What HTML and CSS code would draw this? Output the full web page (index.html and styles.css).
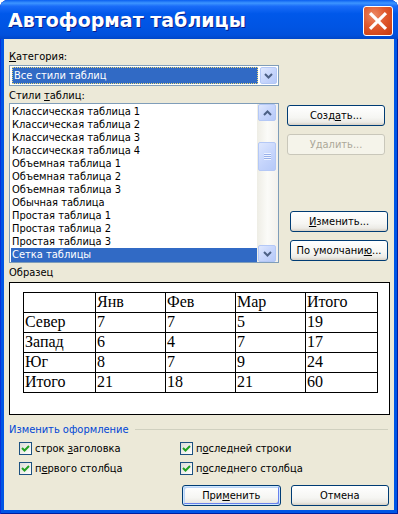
FILE: index.html
```html
<!DOCTYPE html>
<html lang="ru">
<head>
  <meta charset="UTF-8" />
  <title>Автоформат таблицы</title>
  <link rel="stylesheet" href="styles.css">
</head>
<body>
  <div class="window">
    <div class="titlebar">
      <span class="title">Автоформат таблицы</span>
      <div class="close">
        <svg width="19" height="19" viewBox="0 0 19 19"><path d="M3 3 L16 16 M16 3 L3 16" stroke="#fff" stroke-width="3" stroke-linecap="square"/></svg>
      </div>
    </div>

    <div class="client">
      <div class="lbl lbl-cat"><u>К</u>атегория:</div>
      <div class="combo">
        <div class="combo-value"><span>Все стили таблиц</span></div>
        <div class="sbtn combo-btn">
          <svg width="9" height="6" viewBox="0 0 9 6"><path d="M1 1 L4.5 4.5 L8 1" fill="none" stroke="#4d6185" stroke-width="2"/></svg>
        </div>
      </div>

      <div class="lbl lbl-styles">Стили <u>т</u>аблиц:</div>
      <div class="styles-row">
        <div class="listbox">
          <ul class="items">
            <li>Классическая таблица 1</li>
            <li>Классическая таблица 2</li>
            <li>Классическая таблица 3</li>
            <li>Классическая таблица 4</li>
            <li>Объемная таблица 1</li>
            <li>Объемная таблица 2</li>
            <li>Объемная таблица 3</li>
            <li>Обычная таблица</li>
            <li>Простая таблица 1</li>
            <li>Простая таблица 2</li>
            <li>Простая таблица 3</li>
            <li class="selected">Сетка таблицы</li>
          </ul>
          <div class="scrollbar">
            <div class="sbtn">
              <svg width="9" height="6" viewBox="0 0 9 6"><path d="M1 5 L4.5 1.5 L8 5" fill="none" stroke="#4d6185" stroke-width="2"/></svg>
            </div>
            <div class="track">
              <div class="sbtn thumb">
                <svg width="7" height="7" viewBox="0 0 7 7"><path d="M0 0.5 H7 M0 2.5 H7 M0 4.5 H7 M0 6.5 H7" stroke="#eef3ff" stroke-width="1"/><path d="M0 1.5 H7 M0 3.5 H7 M0 5.5 H7" stroke="#8ca7e6" stroke-width="1" opacity="0.8"/></svg>
              </div>
            </div>
            <div class="sbtn">
              <svg width="9" height="6" viewBox="0 0 9 6"><path d="M1 1 L4.5 4.5 L8 1" fill="none" stroke="#4d6185" stroke-width="2"/></svg>
            </div>
          </div>
        </div>
        <div class="side-buttons">
          <div class="btn">Созд<u>а</u>ть...</div>
          <div class="btn disabled">Удалить...</div>
          <div class="btn shifted btn-edit"><u>И</u>зменить...</div>
          <div class="btn shifted">По умолчани<u>ю</u>...</div>
        </div>
      </div>

      <div class="lbl lbl-sample">Образец</div>
      <div class="preview">
        <table class="sample">
          <colgroup><col class="c-first"><col class="c-mid"><col class="c-mid"><col class="c-mid"><col class="c-last"></colgroup>
          <tr><td></td><td>Янв</td><td>Фев</td><td>Мар</td><td>Итого</td></tr>
          <tr><td>Север</td><td>7</td><td>7</td><td>5</td><td>19</td></tr>
          <tr><td>Запад</td><td>6</td><td>4</td><td>7</td><td>17</td></tr>
          <tr><td>Юг</td><td>8</td><td>7</td><td>9</td><td>24</td></tr>
          <tr><td>Итого</td><td>21</td><td>18</td><td>21</td><td>60</td></tr>
        </table>
      </div>

      <div class="group-head"><span>Изменить оформление</span><div class="rule"></div></div>
      <div class="checks">
        <label class="check"><span class="box"><svg width="11" height="11" viewBox="0 0 11 11"><path d="M2 5 L4.5 7.5 L9 3" fill="none" stroke="#21a121" stroke-width="2"/></svg></span><span>строк <u>з</u>аголовка</span></label>
        <label class="check"><span class="box"><svg width="11" height="11" viewBox="0 0 11 11"><path d="M2 5 L4.5 7.5 L9 3" fill="none" stroke="#21a121" stroke-width="2"/></svg></span><span>п<u>о</u>следней строки</span></label>
        <label class="check"><span class="box"><svg width="11" height="11" viewBox="0 0 11 11"><path d="M2 5 L4.5 7.5 L9 3" fill="none" stroke="#21a121" stroke-width="2"/></svg></span><span>п<u>е</u>рвого столбца</span></label>
        <label class="check"><span class="box"><svg width="11" height="11" viewBox="0 0 11 11"><path d="M2 5 L4.5 7.5 L9 3" fill="none" stroke="#21a121" stroke-width="2"/></svg></span><span>п<u>о</u>следнего столбца</span></label>
      </div>

      <div class="actions">
        <div class="btn default">При<u>м</u>енить</div>
        <div class="btn">Отмена</div>
      </div>
    </div>
  </div>
</body>
</html>
```

FILE: styles.css
```css
body {
  margin: 0;
  background: #fff;
  font-family: 'DejaVu Sans Condensed', 'DejaVu Sans', sans-serif;
  font-size: 11px;
  color: #000;
}
u {
  text-decoration: underline;
  text-underline-offset: 1px;
}
.window {
  width: 398px;
  height: 514px;
  display: flex;
  flex-direction: column;
  background: #0055e5;
  border-radius: 8px 8px 0 0;
  box-shadow: inset 1px 0 0 #0831d9, inset -1px 0 0 #001ea0, inset 0 -1px 0 #001ea0;
}
.titlebar {
  height: 39px;
  display: flex;
  align-items: center;
  justify-content: space-between;
  padding: 0 5px 0 8px;
  border-radius: 8px 8px 0 0;
  background: linear-gradient(#0a5ff0 0%, #3d95ff 8%, #1a6cf8 16%, #0058ea 35%, #0054e3 70%, #0050dc 90%, #0046c8 100%);
}
.title {
  color: #fff;
  font-family: 'DejaVu Sans', sans-serif;
  font-weight: bold;
  font-size: 19px;
  text-shadow: 1px 1px 0 #0a1e8a;
}
.close {
  width: 28px;
  height: 28px;
  border: 1px solid #fff;
  border-radius: 3px;
  display: flex;
  align-items: center;
  justify-content: center;
  background: radial-gradient(circle at 35% 30%, #ec8a66 0%, #e0582c 45%, #c83a0e 100%);
  margin-top: 3px;
}
.close svg { width: 20px; height: 20px; }
.client {
  flex: 1;
  margin: 0 4px 4px;
  padding: 0 5px;
  background: #ece9d8;
}
.lbl {
  line-height: 13px;
  height: 13px;
}
.lbl-cat { margin-top: 11px; }
.combo {
  margin-top: 2px;
  width: 270px;
  height: 21px;
  box-sizing: border-box;
  border: 1px solid #7f9db9;
  background: #fff;
  display: flex;
  align-items: center;
  padding: 1px;
}
.combo-value {
  flex: 1;
  height: 17px;
  padding: 0 2px 0 1px;
  display: flex;
}
.combo-value span {
  flex: 1;
  background: #316ac5;
  color: #fff;
  border: 1px dotted #e8d87a;
  line-height: 15px;
  padding-left: 1px;
}
.sbtn {
  width: 17px;
  height: 17px;
  box-sizing: border-box;
  border: 1px solid #b4c8f6;
  border-radius: 2px;
  background: linear-gradient(135deg, #dfe8fe 0%, #c7d6fc 50%, #b6c9f8 100%);
  display: flex;
  align-items: center;
  justify-content: center;
}
.lbl-styles { margin-top: 3px; }
.styles-row {
  display: flex;
  margin-top: 1px;
}
.listbox {
  width: 270px;
  height: 160px;
  box-sizing: border-box;
  border: 1px solid #7f9db9;
  background: #fff;
  display: flex;
}
.items {
  list-style: none;
  margin: 0;
  padding: 1px 0 0 1px;
  flex: 1;
}
.items li {
  height: 13px;
  line-height: 13px;
  padding-left: 1px;
  white-space: nowrap;
}
.items li.selected {
  height: 14px;
  line-height: 14px;
  background: #316ac5;
  color: #fff;
}
.scrollbar {
  width: 19px;
  display: flex;
  flex-direction: column;
  padding: 0 1px;
  background: linear-gradient(90deg, #eeede5, #fbfbf8 50%, #f3f1ec);
}
.scrollbar .sbtn { width: 18px; }
.track {
  flex: 1;
  padding-top: 21px;
}
.thumb { height: 29px; }
.side-buttons {
  display: flex;
  flex-direction: column;
  margin-left: 8px;
  padding-top: 2px;
}
.btn {
  width: 98px;
  height: 21px;
  box-sizing: border-box;
  border: 1px solid #003c74;
  border-radius: 3px;
  background: linear-gradient(#ffffff 0%, #f6f6f3 60%, #ecebe6 85%, #d6d0c5 100%);
  text-align: center;
  line-height: 19px;
}
.side-buttons .btn { margin-bottom: 8px; }
.side-buttons .btn:last-child { margin-bottom: 0; }
.btn.disabled {
  color: #aca899;
  border-color: #c9c7ba;
  background: #f5f4ea;
}
.btn.shifted { margin-left: 3px; }
.btn-edit { margin-top: 48px; }
.lbl-sample { margin-top: 3px; }
.preview {
  margin-top: 3px;
  width: 381px;
  height: 133px;
  box-sizing: border-box;
  border: 1px solid #000;
  background: #fff;
  padding: 9px 0 0 13px;
}
.sample {
  border-collapse: collapse;
  font-family: 'Liberation Serif', serif;
  font-size: 16px;
  table-layout: fixed;
}
.sample td {
  border: 1px solid #000;
  height: 19px;
  padding: 0 0 2px 1px;
  line-height: 17px;
  box-sizing: border-box;
}
.c-first { width: 72px; }
.c-mid { width: 70px; }
.c-last { width: 72px; }
.group-head {
  margin-top: 8px;
  display: flex;
  align-items: center;
  color: #0046d5;
  line-height: 13px;
}
.rule {
  flex: 1;
  height: 1px;
  margin-left: 6px;
  margin-right: 1px;
  background: #d0d0bf;
}
.checks {
  display: grid;
  grid-template-columns: 161px 1fr;
  row-gap: 7px;
  margin: 6px 0 0 10px;
}
.check {
  display: flex;
  align-items: center;
  height: 13px;
  line-height: 13px;
}
.box {
  width: 13px;
  height: 13px;
  box-sizing: border-box;
  border: 1px solid #1c5180;
  background: linear-gradient(135deg, #dcdcd7, #fff);
  margin-right: 3px;
  display: flex;
}
.actions {
  display: flex;
  gap: 10px;
  margin-top: 10px;
  padding-left: 173px;
}
.actions .btn { width: 99px; }
.btn.default {
  box-shadow: inset 0 0 0 1px #cee7ff, inset -2px -2px 0 #6982ee, inset 2px 2px 0 #bcd4f6;
}
```
